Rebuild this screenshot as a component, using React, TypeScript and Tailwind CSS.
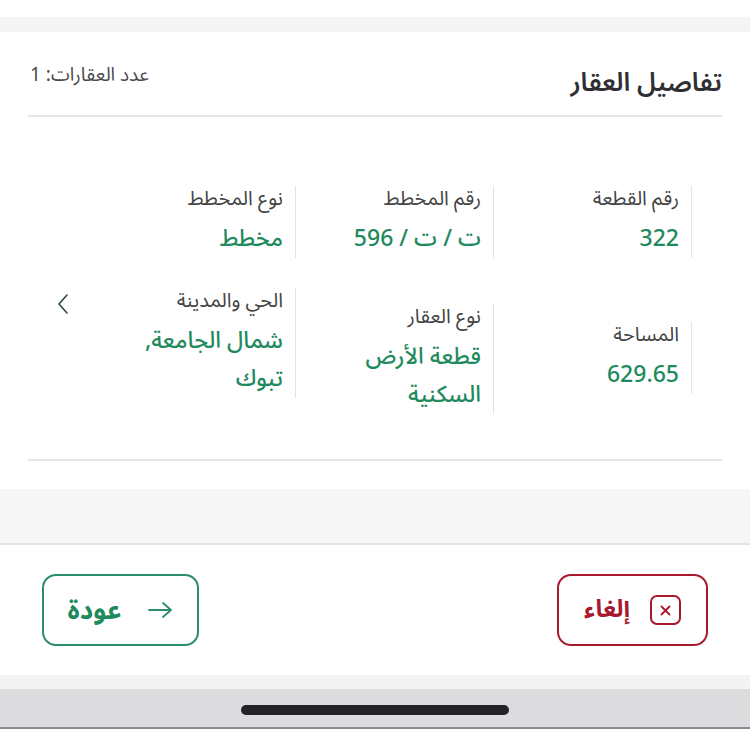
import React from "react";

const font = { fontFamily: '"Noto Sans Arabic", "DejaVu Sans", "Noto Sans", sans-serif' };

function Item({ label, value, extra }: { label: string; value: React.ReactNode; extra?: string }) {
  return (
    <div className={`w-[198px] shrink-0 border-r border-[#e4e4e4] pr-[12px] ${extra ?? ""}`}>
      <div className="text-[20px] leading-[26px] text-[#444]">{label}</div>
      <div className="mt-[8px] text-[23px] leading-[38px] font-medium text-[#1f8a5e]">{value}</div>
    </div>
  );
}

export default function App() {
  return (
    <div dir="rtl" style={font} className="w-[750px] h-[729px] bg-white flex flex-col overflow-hidden">
      <div className="h-[17px] bg-white" />
      <div className="h-[15px] bg-[#f4f4f5]" />
      <div className="px-[28px]">
        <div className="h-[85px] flex items-center justify-between border-b-2 border-[#e6e6e8] pt-[18px]">
          <div className="text-[26px] font-semibold text-[#2f2f33]">تفاصيل العقار</div>
          <div className="text-[19px] text-[#4a4a4e] mb-[14px] pl-[2px]">عدد العقارات: 1</div>
        </div>
        <div className="h-[344px] border-b-2 border-[#e6e6e8] relative">
          <div className="flex pr-[30px] pt-[69px]">
            <Item label="رقم القطعة" value="322" />
            <Item label="رقم المخطط" value="ت / ت / 596" />
            <Item label="نوع المخطط" value="مخطط" />
          </div>
          <div className="flex items-start pr-[30px] pt-[30px]">
            <Item label="المساحة" value="629.65" extra="mt-[34px]" />
            <Item label="نوع العقار" value={<>قطعة الأرض<br />السكنية</>} extra="mt-[16px]" />
            <Item label="الحي والمدينة" value={<>شمال الجامعة,<br />تبوك</>} />
            <div className="flex-1 flex justify-center pt-[5px]">
              <svg width="14" height="22" viewBox="0 0 14 22" fill="none" stroke="#2a4a45" strokeWidth="1.6" strokeLinecap="round" strokeLinejoin="round">
                <path d="M11 2 L3 11 L11 20" />
              </svg>
            </div>
          </div>
        </div>
        <div className="h-[28px]" />
      </div>
      <div className="h-[56px] bg-[#f6f6f7] border-b-2 border-[#e4e4e6]" />
      <div className="h-[130px] bg-white flex items-center justify-between px-[42px]">
        <button className="w-[151px] h-[72px] rounded-[14px] border-2 border-[#a8192e] flex items-center justify-center gap-[20px]">
          <span className="w-[31px] h-[30px] rounded-[7px] border-2 border-[#a8192e] flex items-center justify-center">
            <svg width="11" height="11" viewBox="0 0 11 11" stroke="#a8192e" strokeWidth="1.8" strokeLinecap="round">
              <path d="M1.5 1.5 L9.5 9.5 M9.5 1.5 L1.5 9.5" />
            </svg>
          </span>
          <span className="text-[24px] font-bold text-[#a8192e]">إلغاء</span>
        </button>
        <button className="w-[157px] h-[72px] rounded-[14px] border-2 border-[#2b8c6b] flex items-center justify-center gap-[26px]">
          <svg width="26" height="18" viewBox="0 0 26 18" fill="none" stroke="#2b8c6b" strokeWidth="1.8" strokeLinecap="round" strokeLinejoin="round">
            <path d="M2 9 H24 M16 2 L24 9 L16 16" />
          </svg>
          <span className="text-[26px] font-bold text-[#1f8a5e]">عودة</span>
        </button>
      </div>
      <div className="h-[14px] bg-[#f3f3f4]" />
      <div className="flex-1 bg-[#dcdcdf] flex justify-center pt-[16px] border-b-2 border-[#8a8a90]">
        <div className="w-[268px] h-[10px] rounded-full bg-[#232326]" />
      </div>
    </div>
  );
}
